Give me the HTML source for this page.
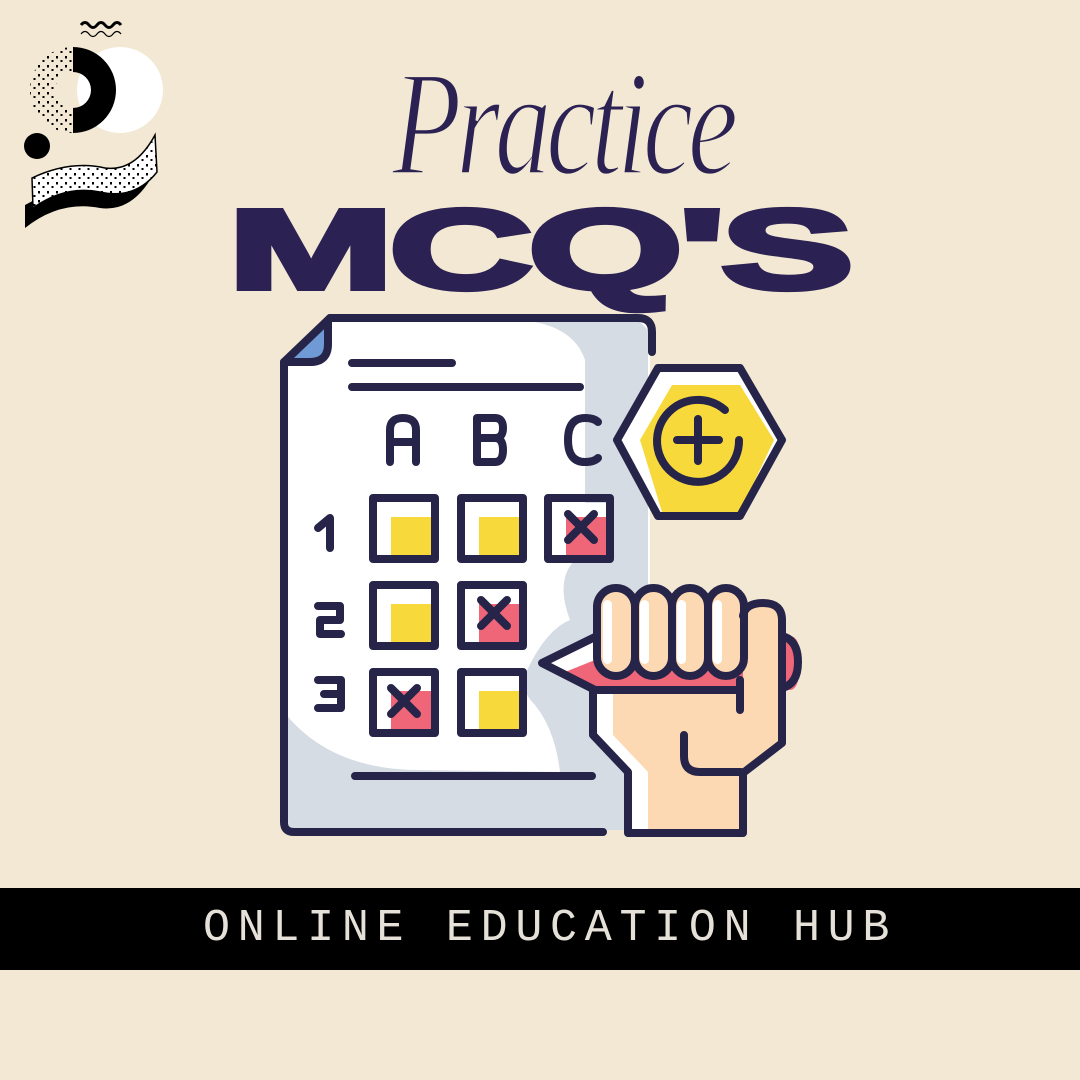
<!DOCTYPE html>
<html><head><meta charset="utf-8"><style>
html,body{margin:0;padding:0}
body{width:1080px;height:1080px;background:#f2e8d4;position:relative;overflow:hidden;font-family:"Liberation Sans",sans-serif}
.banner{position:absolute;left:0;top:888px;width:1080px;height:82px;background:#000}
.banner span{position:absolute;left:203px;top:16px;font-family:"Liberation Mono",monospace;font-size:45px;letter-spacing:7.7px;color:#e6e1d8;line-height:50px;white-space:nowrap}
.mcq{position:absolute;left:228px;top:184px;font-weight:bold;font-size:130px;color:#2b2152;transform:scale(1.53,0.87);transform-origin:0 0;line-height:150px;letter-spacing:-3px;-webkit-text-stroke:6px #2b2152}
.prac{position:absolute;left:392px;top:30px;font-family:"Liberation Serif",serif;font-style:italic;font-size:120px;color:#2b2152;line-height:150px;letter-spacing:-6px;transform:scale(0.95,1.25);transform-origin:0 0;-webkit-text-stroke:2.5px #f2e8d4}
</style></head><body>
<svg width="1080" height="1080" style="position:absolute;left:0;top:0">
<defs>
<pattern id="dots" width="9" height="9" patternUnits="userSpaceOnUse"><rect x="2" y="2" width="2" height="2.5" fill="#000"/><rect x="6.5" y="6" width="2" height="2" fill="#000"/></pattern>
</defs>
<path d="M81 25 q4 -5 8 0 t8 0 t8 0 t8 0 t8 0" fill="none" stroke="#000" stroke-width="3"/>
<path d="M81 34 q4 -5 8 0 t8 0 t8 0 t8 0 t8 0" fill="none" stroke="#000" stroke-width="1.2"/>
<circle cx="120" cy="90" r="43" fill="#fff"/>
<path d="M73 47 A43 43 0 0 1 73 133 L73 108 A18 18 0 0 0 73 72 Z" fill="#000"/>
<path d="M73 47 A43 43 0 0 0 73 133 L73 108 A18 18 0 0 1 73 72 Z" fill="url(#dots)"/>
<circle cx="37" cy="146" r="13" fill="#000"/>
<path d="M25 205 L25 228 Q60 200 100 208 Q130 212 150 180 L150 160 Q130 190 95 190 Q55 188 25 205Z" fill="#000"/>
<path d="M32 178 Q70 160 105 168 Q135 172 155 135 L157 172 Q135 200 100 192 Q65 185 33 208Z" fill="#fff" stroke="#000" stroke-width="1.5"/>
<path d="M32 178 Q70 160 105 168 Q135 172 155 135 L157 172 Q135 200 100 192 Q65 185 33 208Z" fill="url(#dots)"/>
<path d="M282 362 L282 826 Q282 834 290 834 L600 834 L600 820 L640 820 L650 700 L650 330 Q650 318 638 318 L330 318 Z" fill="#fff"/>
<path d="M535 322 L638 320 L648 330 L648 830 L290 830 Q282 800 284 712 Q330 770 420 770 L560 772 Q555 730 535 705 Q520 690 525 675 Q545 630 570 620 Q555 580 575 560 Q590 530 585 500 L585 360 Q575 330 535 322Z" fill="#d6dce3"/>
<path d="M292 350 L325 320 L325 350 Q325 362 313 362 L286 362Z" fill="#6f9ad6"/>
<g fill="none" stroke="#262448" stroke-width="8" stroke-linecap="round" stroke-linejoin="round">
<path d="M330 318 L638 318 Q652 318 652 332 L652 352"/>
<path d="M330 318 L284 362 L284 822 Q284 832 294 832 L603 832"/>
<path d="M284 362 L310 362 Q328 362 328 344 L328 320"/>
<path d="M352 363 L452 363 M352 387 L580 387 M355 776 L592 776"/>
<path d="M390 462 L390 430 Q390 418 403 418 Q416 418 416 430 L416 462 M390 442 L416 442"/>
<path d="M477 462 L477 418 L495 418 Q503 418 503 428 Q503 438 495 438 L477 438 M495 438 Q503 438 503 450 Q503 462 495 462 L477 462"/>
<path d="M598 422 Q594 418 585 418 Q568 418 568 440 Q568 462 585 462 Q594 462 598 458"/>
<path d="M318 528 L330 518 L330 548"/>
<path d="M318 606 L340 606 L340 620 L320 620 L320 634 L341 634"/>
<path d="M318 680 L341 680 L341 694 L324 694 M341 694 L341 708 L318 708"/>
</g>
<g>
<rect x="378" y="503" width="53" height="52" fill="#fff"/>
<rect x="391" y="517" width="40" height="38" fill="#f7d93c"/>
<rect x="466" y="503" width="53" height="52" fill="#fff"/>
<rect x="479" y="517" width="40" height="38" fill="#f7d93c"/>
<rect x="553" y="503" width="53" height="52" fill="#fff"/>
<rect x="566" y="517" width="40" height="38" fill="#ef6678"/>
<rect x="378" y="590" width="53" height="52" fill="#fff"/>
<rect x="391" y="604" width="40" height="38" fill="#f7d93c"/>
<rect x="466" y="590" width="53" height="52" fill="#fff"/>
<rect x="479" y="604" width="40" height="38" fill="#ef6678"/>
<rect x="378" y="677" width="53" height="52" fill="#fff"/>
<rect x="391" y="691" width="40" height="38" fill="#ef6678"/>
<rect x="466" y="677" width="53" height="52" fill="#fff"/>
<rect x="479" y="691" width="40" height="38" fill="#f7d93c"/>
</g>
<g fill="none" stroke="#262448" stroke-width="8" stroke-linejoin="round" stroke-linecap="round">
<rect x="373" y="498" width="62" height="61"/>
<rect x="461" y="498" width="62" height="61"/>
<rect x="548" y="498" width="62" height="61"/>
<rect x="373" y="585" width="62" height="61"/>
<rect x="461" y="585" width="62" height="61"/>
<rect x="373" y="672" width="62" height="61"/>
<rect x="461" y="672" width="62" height="61"/>
<path d="M568 514 L594 540 M594 514 L568 540"/>
<path d="M481 600 L507 626 M507 600 L481 626"/>
<path d="M391 688 L417 714 M417 688 L391 714"/>
</g>
<path d="M615 440 L657 367 L740 367 L782 440 L740 515 L657 515Z" fill="#fff"/>
<path d="M640 440 L672 385 L740 385 L774 440 L740 512 L662 512Z" fill="#f7d93c"/>
<g fill="none" stroke="#262448" stroke-width="8" stroke-linejoin="round" stroke-linecap="round">
<path d="M617 440 L658 368 L740 368 L782 440 L740 516 L658 516Z"/>
<path d="M739 440 A41 41 0 1 1 725 410"/>
<path d="M698 419 L698 461 M677 440 L719 440"/>
</g>
<path d="M542 663 L595 636 L790 636 Q800 636 800 660 Q800 690 790 690 L600 692Z" fill="#ef6678"/>
<path d="M542 663 L595 636 L595 660 L565 672Z" fill="#fff"/>
<path d="M593 692 L593 735 L628 772 L628 833 L743 833 L743 773 L782 743 L782 620 Q782 603 763 603 Q743 603 743 620 L743 692Z" fill="#fcd9b3"/>
<path d="M593 692 L593 735 L628 772 L628 833 L648 833 L648 772 L613 735 L613 692Z" fill="#fff"/>
<g fill="#fcd9b3" stroke="#262448" stroke-width="8">
<rect x="597" y="588" width="38" height="88" rx="19"/>
<rect x="635" y="588" width="37" height="88" rx="18.5"/>
<rect x="672" y="588" width="36" height="88" rx="18"/>
<rect x="708" y="588" width="36" height="88" rx="18"/>
</g>
<g fill="#fff"><rect x="603" y="600" width="9" height="64" rx="4.5"/><rect x="640" y="600" width="9" height="64" rx="4.5"/><rect x="677" y="600" width="9" height="64" rx="4.5"/><rect x="713" y="600" width="9" height="64" rx="4.5"/></g>
<g fill="none" stroke="#262448" stroke-width="8" stroke-linejoin="round" stroke-linecap="round">
<path d="M597 636 L542 663 L595 690 L740 690"/>
<path d="M782 636 Q798 640 798 662 Q798 684 782 688"/>
<path d="M593 692 L593 735 L628 772 L628 833 L743 833 L743 773 L782 743 L782 620 Q782 603 763 603 Q745 603 743 616"/>
<path d="M740 680 L740 710"/>
<path d="M684 735 L684 756 Q684 772 700 772 L741 772"/>
</g>
</svg>
<div class="prac">Practice</div>
<div class="mcq">MCQ'S</div>
<div class="banner"><span>ONLINE EDUCATION HUB</span></div>
</body></html>
